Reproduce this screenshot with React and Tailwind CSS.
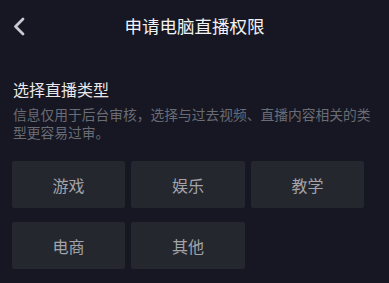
import React from "react";

const font = { fontFamily: '"Noto Sans CJK SC", "Noto Sans", sans-serif' };

function Btn({ label }) {
  return (
    <div className="h-[47px] flex items-center justify-center bg-[#25272f] rounded-[2px] text-[16px] text-[#a3a4aa]">
      {label}
    </div>
  );
}

export default function App() {
  return (
    <div
      className="w-[389px] h-[283px] bg-[#161722] overflow-hidden flex flex-col"
      style={font}
    >
      <div className="relative h-[52px] flex items-center justify-center shrink-0">
        <svg
          className="absolute left-[12px] top-[16px]"
          width="14"
          height="21"
          viewBox="0 0 14 21"
          fill="none"
        >
          <path
            d="M11 3 L3.5 10.5 L11 18"
            stroke="#c9cad0"
            strokeWidth="2.8"
            strokeLinecap="round"
            strokeLinejoin="round"
          />
        </svg>
        <div className="text-[17.5px] leading-[24px] text-[#f2f2f4]">
          申请电脑直播权限
        </div>
      </div>
      <div className="px-[12px] pt-[26px]">
        <div className="pl-px text-[16px] leading-[22px] text-[#e9e9ec]">
          选择直播类型
        </div>
        <div className="pl-px mt-[5px] text-[13.75px] leading-[18px] text-[#6a6c75]">
          信息仅用于后台审核，选择与过去视频、直播内容相关的类型更容易过审。
        </div>
        <div className="mt-[20px] grid grid-cols-[113px_114px_113px] gap-x-[6px] gap-y-[14px]">
          <Btn label="游戏" />
          <Btn label="娱乐" />
          <Btn label="教学" />
          <Btn label="电商" />
          <Btn label="其他" />
        </div>
      </div>
    </div>
  );
}
